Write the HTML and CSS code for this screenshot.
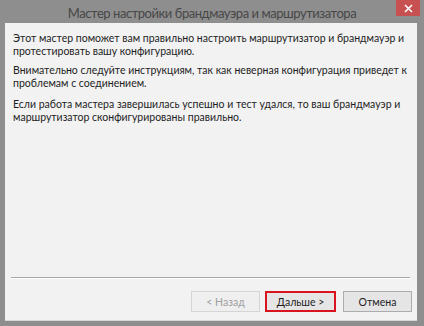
FILE: index.html
```html
<!DOCTYPE html>
<html lang="ru">

<head>
    <meta charset="UTF-8">
    <meta name="viewport" content="width=device-width, initial-scale=1.0">
    <title>Мастер настройки брандмауэра и маршрутизатора</title>
    <link rel="stylesheet" href="styles.css">
</head>

<body>
    <div class="window">
        <div class="titlebar">
            <h1 class="title">Мастер настройки брандмауэра и маршрутизатора</h1>
            <button class="close-btn" aria-label="Закрыть">
                <svg width="9" height="9" viewBox="0 0 9 9">
                    <path d="M1 1 L8 8 M8 1 L1 8" stroke="#ffffff" stroke-width="1.6" />
                </svg>
            </button>
        </div>
        <div class="client">
            <div class="content">
                <p>Этот мастер поможет вам правильно настроить маршрутизатор и брандмауэр и протестировать вашу конфигурацию.</p>
                <p>Внимательно следуйте инструкциям, так как неверная конфигурация приведет к проблемам с соединением.</p>
                <p class="last">Если работа мастера завершилась успешно и тест удался, то ваш брандмауэр и маршрутизатор сконфигурированы правильно.</p>
            </div>
            <div class="footer">
                <div class="separator"></div>
                <div class="buttons">
                    <button class="btn" disabled>&lt; Назад</button>
                    <button class="btn btn-next">Дальше &gt;</button>
                    <button class="btn btn-cancel">Отмена</button>
                </div>
            </div>
        </div>
    </div>
</body>

</html>
```

FILE: styles.css
```css
body {
    margin: 0;
    background-color: #8e8e8e;
    font-family: Lato, "Noto Sans", sans-serif;
    overflow: hidden;
}

.window {
    width: 424px;
    height: 326px;
    display: flex;
    flex-direction: column;
}

.titlebar {
    position: relative;
    height: 23px;
    display: flex;
    justify-content: center;
    align-items: center;
}

.title {
    margin: 0;
    font-size: 13px;
    font-weight: 400;
    letter-spacing: -0.45px;
    color: #474747;
    padding-top: 2px;
}

.close-btn {
    position: absolute;
    top: 0;
    right: 4px;
    width: 24px;
    height: 16px;
    border: none;
    padding: 0;
    background-color: #c75050;
    display: flex;
    justify-content: center;
    align-items: center;
}

.client {
    margin: 0 7px 0 5px;
    height: 297px;
    background-color: #f2f2f2;
    display: flex;
    flex-direction: column;
    border-bottom: 1px solid #d8d8d8;
}

.content {
    flex-grow: 1;
    padding: 9px 8px 0;
    color: #1e1e1e;
    font-size: 10.5px;
    line-height: 13px;
}

.content p {
    margin: 0 0 6px;
}

.content p.last {
    margin-top: 8px;
}

.separator {
    margin: 0 7px 0 6px;
    height: 1px;
    background-color: #a8a8a8;
    border-bottom: 1px solid #ffffff;
}

.buttons {
    display: flex;
    justify-content: flex-end;
    padding: 12px 5px 8px;
    gap: 5px;
}

.btn {
    font-family: Lato, "Noto Sans", sans-serif;
    font-size: 10.5px;
    color: #1e1e1e;
    background-color: #e5e5e5;
    border: 1px solid #acacac;
    width: 69px;
    height: 21px;
    padding: 0;
}

.btn:disabled {
    color: #a0a0a0;
    background-color: #efefef;
    border-color: #d5d5d5;
}

.btn-next {
    width: 71px;
    border: 2px solid #d9141f;
}

.btn-cancel {
    margin-left: 2px;
}
```
